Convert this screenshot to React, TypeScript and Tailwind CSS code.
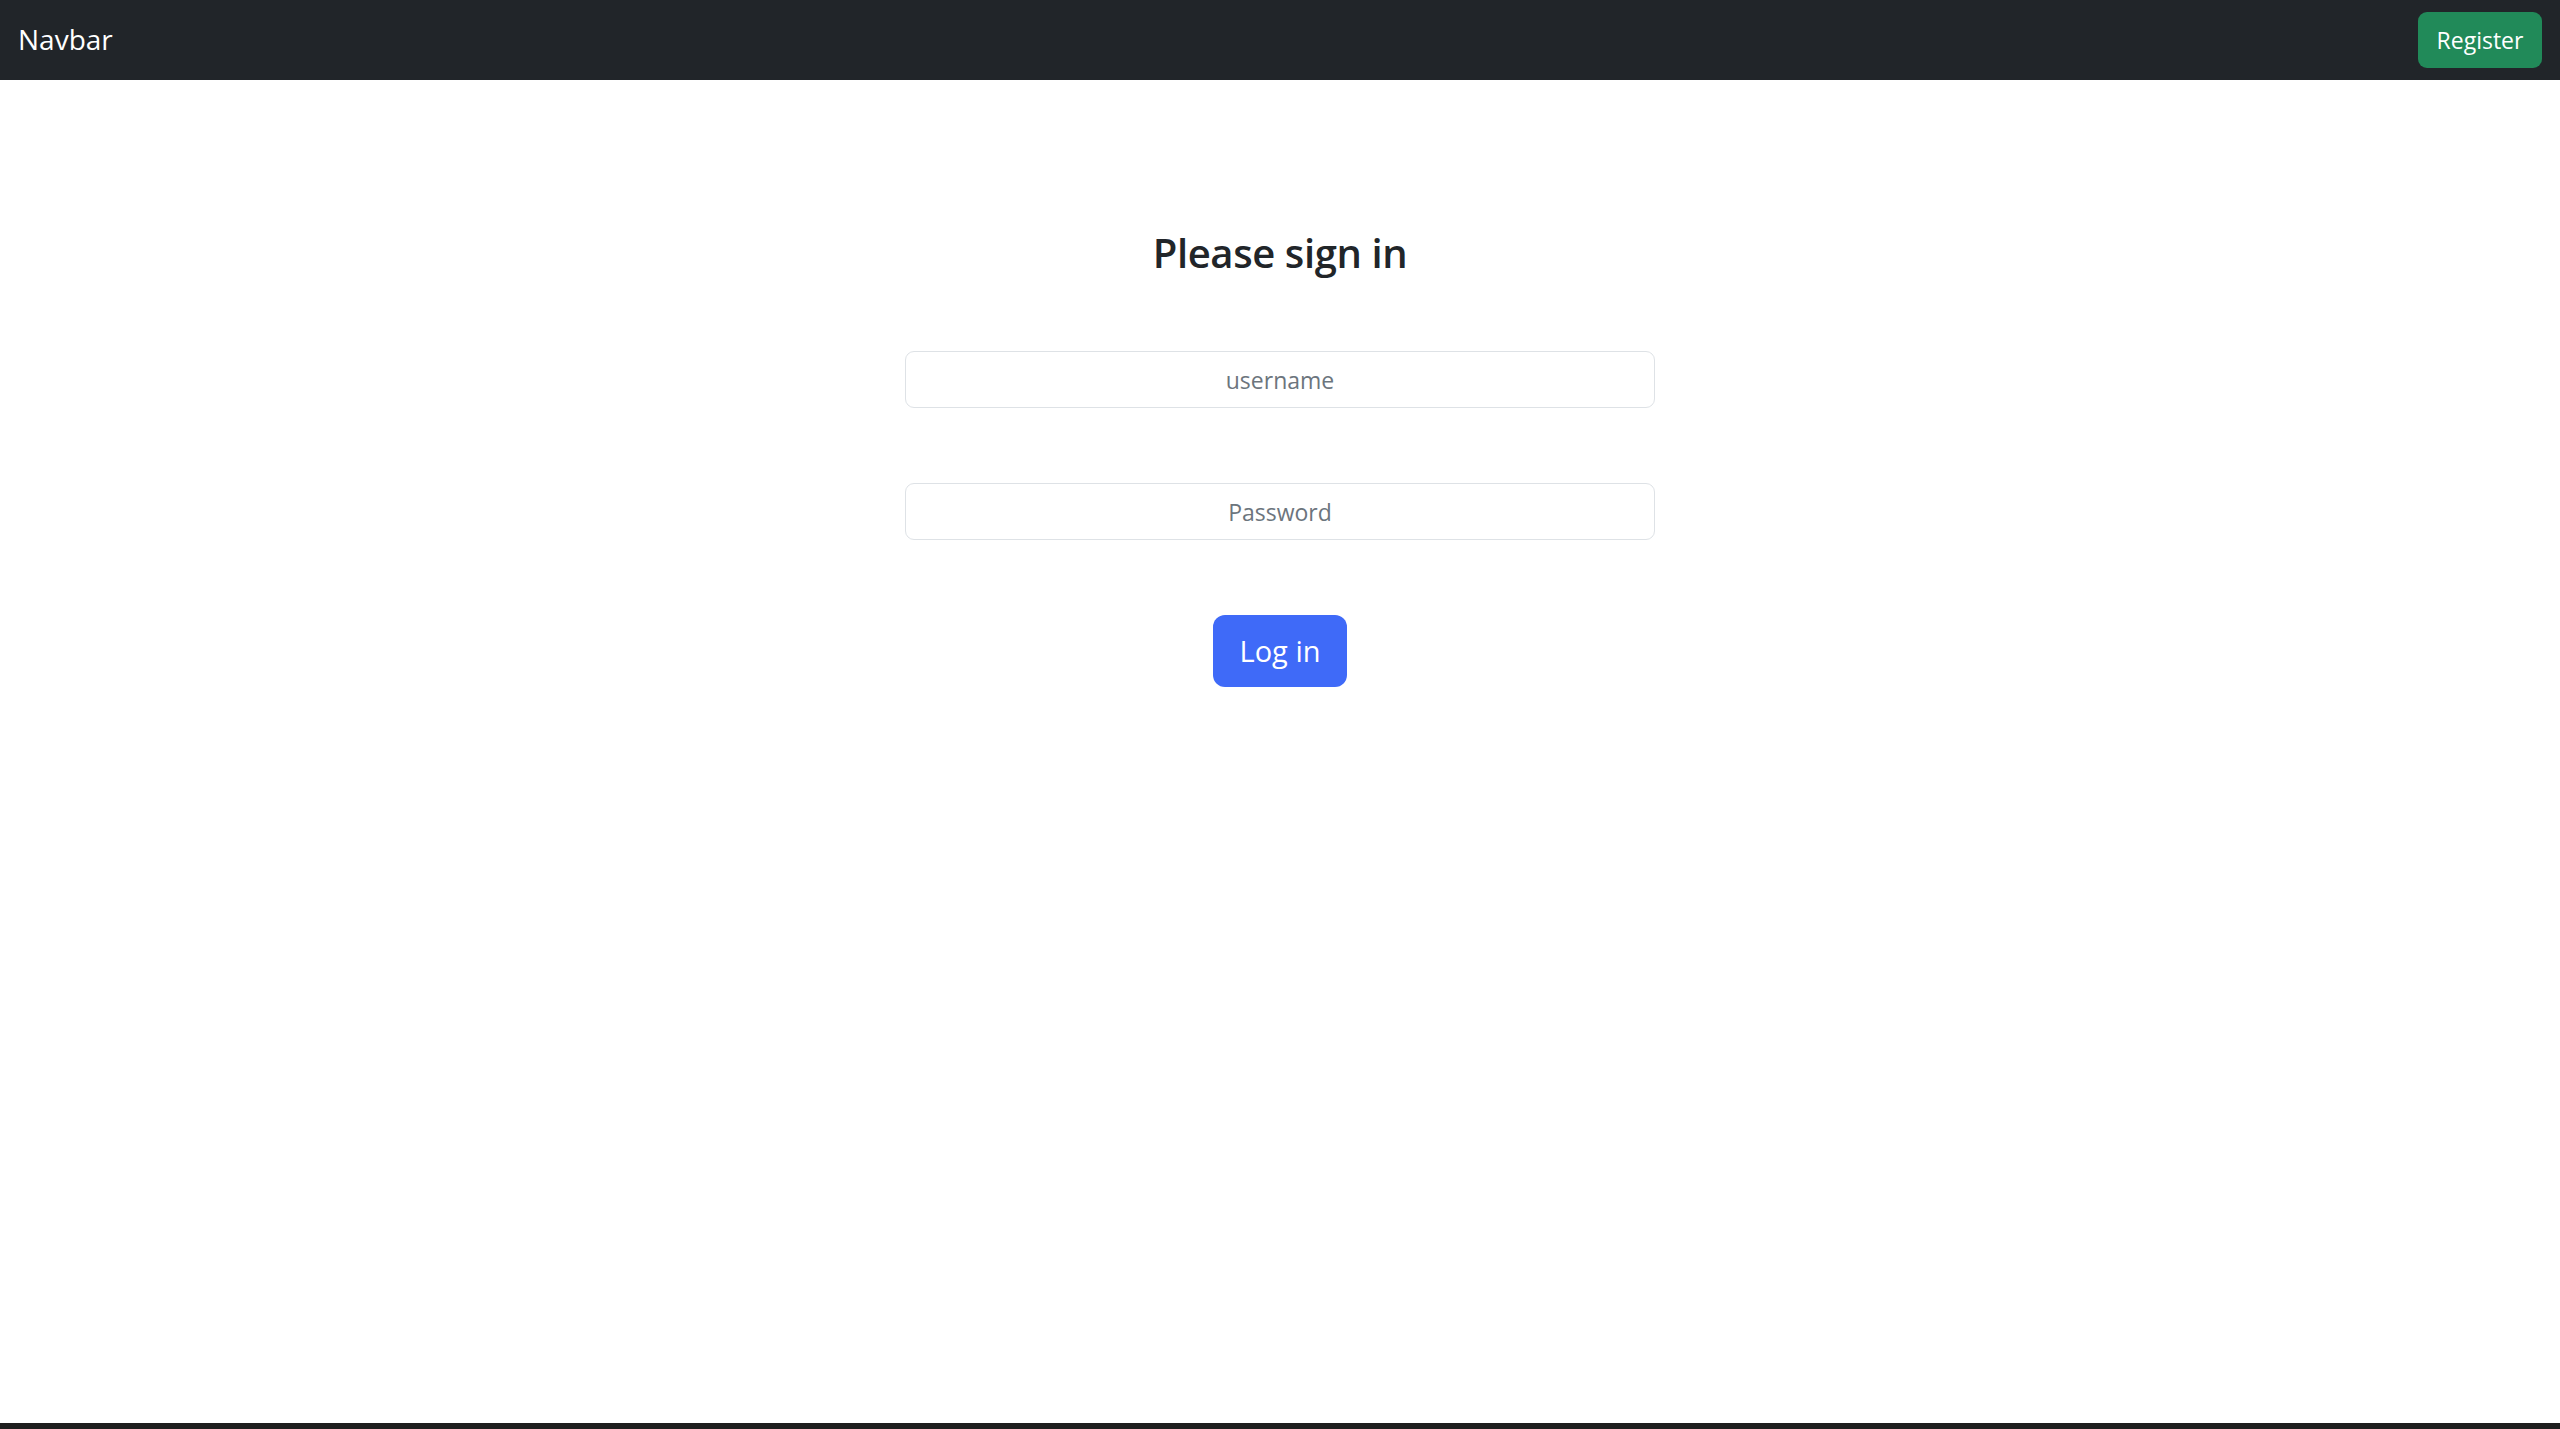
import React from "react";

export default function App() {
  const font = { fontFamily: '"Open Sans", "Noto Sans", Arial, sans-serif' };
  return (
    <div className="flex min-h-screen flex-col bg-white text-[#212529]" style={font}>
      <nav className="flex h-[80px] items-center justify-between bg-[#212529] px-[18px]">
        <span className="pb-[2px] text-[28px] leading-none text-white">Navbar</span>
        <button className="flex h-[56px] w-[124px] items-center justify-center rounded-[9px] bg-[#218a59] text-[23px] text-white">
          Register
        </button>
      </nav>
      <main className="flex flex-1 flex-col items-center pt-[149px]">
        <h3 className="text-[40px] font-semibold leading-[1.2] tracking-[-0.4px]">Please sign in</h3>
        <div className="mt-[74px] flex w-[750px] flex-col gap-[75px]">
          <input
            className="h-[57px] w-full rounded-[9px] border-[1.5px] border-[#dee2e6] bg-white text-center text-[23px] text-[#212529] outline-none placeholder:text-[#6c757d]"
            placeholder="username"
          />
          <input
            type="password"
            className="h-[57px] w-full rounded-[9px] border-[1.5px] border-[#dee2e6] bg-white text-center text-[23px] text-[#212529] outline-none placeholder:text-[#6c757d]"
            placeholder="Password"
          />
        </div>
        <button className="mt-[75px] flex h-[72px] w-[134px] items-center justify-center rounded-[12px] bg-[#3f6af8] text-[29px] text-white">
          Log in
        </button>
      </main>
      <div className="h-[6px] bg-[#1e1e1e]" />
    </div>
  );
}
